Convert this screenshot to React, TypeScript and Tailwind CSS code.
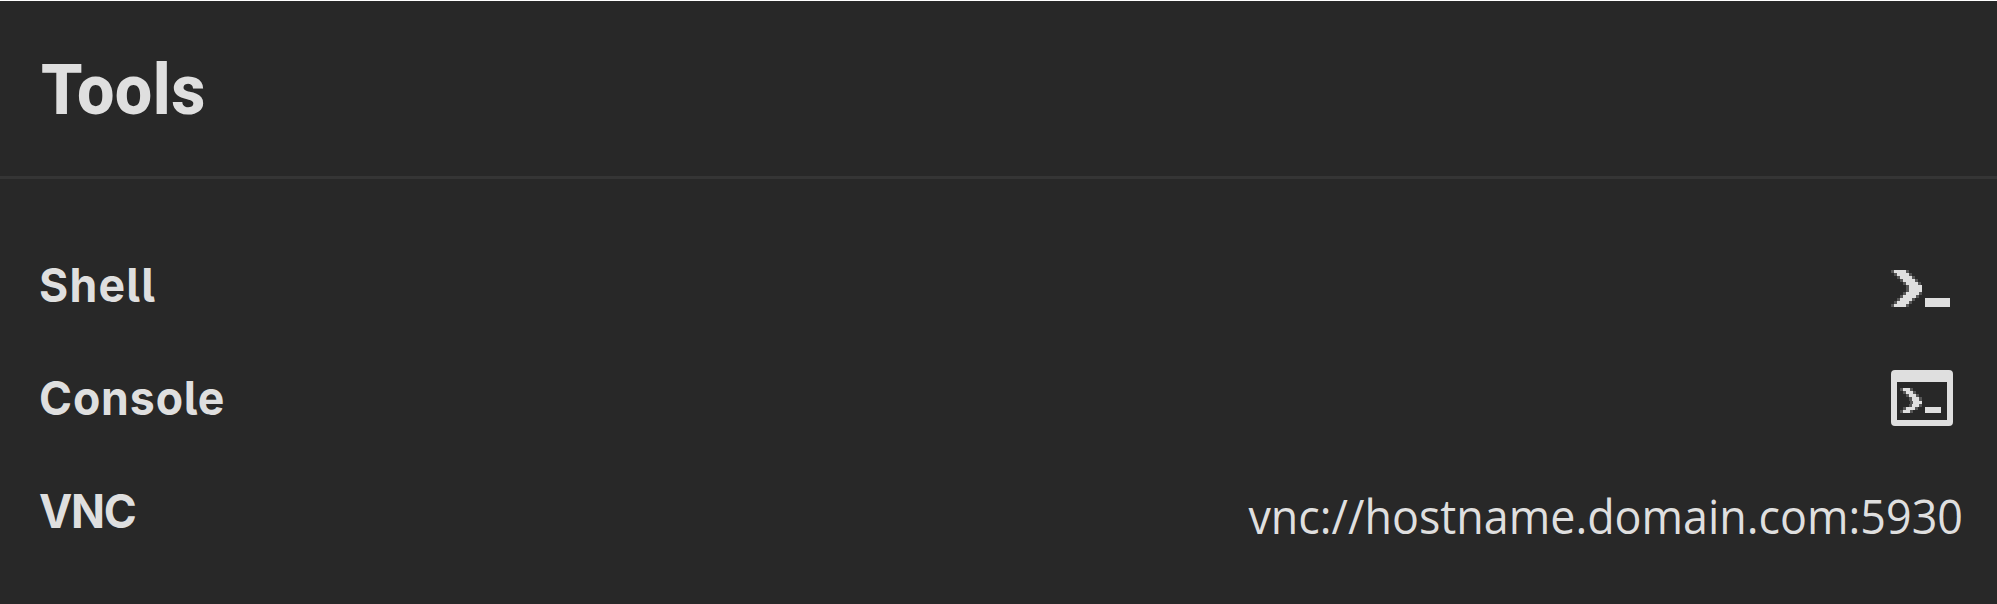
import type { ReactNode } from "react";

type Span = [start: number, end: number];

const LARGE_CHEVRON: Span[] = [
  [3, 15], [6, 18], [9, 21], [12, 24], [15, 27], [18, 31],
  [18, 31], [15, 28], [12, 25], [9, 21], [6, 18], [3, 15],
];

const SMALL_CHEVRON: Span[] = [
  [12, 19], [15, 22], [18, 25], [21, 28], [22, 31], [21, 28], [15, 24], [12, 19],
];

function Chevron({ rows, top, step }: { rows: Span[]; top: number; step: number }) {
  return (
    <g shapeRendering="crispEdges">
      {rows.map(([start, end], i) => {
        const y = Math.round(top + i * step);
        const height = Math.round(top + (i + 1) * step) - y;
        return (
          <g key={i}>
            <rect x={start} y={y} width={end - start} height={height} />
            <rect x={start - 3} y={y} width="3" height={height} opacity="0.25" />
            {end < 31 && <rect x={end} y={y} width="3" height={height} opacity="0.25" />}
          </g>
        );
      })}
    </g>
  );
}

function ShellIcon() {
  return (
    <svg width="62" height="56" viewBox="0 0 62 56" fill="currentColor" aria-hidden="true">
      <Chevron rows={LARGE_CHEVRON} top={13} step={3.083} />
      <path d="M34 41H59V50H34Z" />
    </svg>
  );
}

function ConsoleIcon() {
  return (
    <svg width="62" height="56" viewBox="0 0 62 56" fill="currentColor" aria-hidden="true">
      <path
        fillRule="evenodd"
        d="M4 0H58Q62 0 62 4V52Q62 56 58 56H4Q0 56 0 52V4Q0 0 4 0ZM6 12V50H56V12Z"
      />
      <Chevron rows={SMALL_CHEVRON} top={18} step={3.125} />
      <path d="M34 37H50V43H34Z" />
    </svg>
  );
}

function Row({ label, tracking, children }: { label: string; tracking: string; children: ReactNode }) {
  return (
    <div className="flex h-[113px] items-center justify-between">
      <span
        className={`origin-left scale-x-[0.95] text-[47px] leading-[60px] font-bold [font-feature-settings:'cv05'] ${tracking}`}
      >
        {label}
      </span>
      {children}
    </div>
  );
}

export default function App() {
  return (
    <main className="h-[604px] w-full overflow-hidden border-t border-white bg-[#282828] font-['Inter',sans-serif] text-[#dfdfdf]">
      <header className="flex h-[178px] items-center border-b-3 border-[#353535] px-[41px] pt-[2px]">
        <h1 className="origin-left scale-x-[0.95] font-['Roboto',sans-serif] text-[70px] leading-[80px] font-extrabold tracking-[0.5px]">
          Tools
        </h1>
      </header>
      <section className="pt-[49.5px] pr-[44px] pl-[39px]">
        <Row label="Shell" tracking="tracking-[1.3px]">
          <ShellIcon />
        </Row>
        <Row label="Console" tracking="tracking-[0.9px]">
          <ConsoleIcon />
        </Row>
        <Row label="VNC" tracking="tracking-[-1.4px]">
          <span className="mr-[-10px] origin-right scale-x-[0.954] pt-[9px] font-['Open_Sans',sans-serif] text-[47px] leading-[60px]">
            vnc://hostname.domain.com:5930
          </span>
        </Row>
      </section>
    </main>
  );
}
